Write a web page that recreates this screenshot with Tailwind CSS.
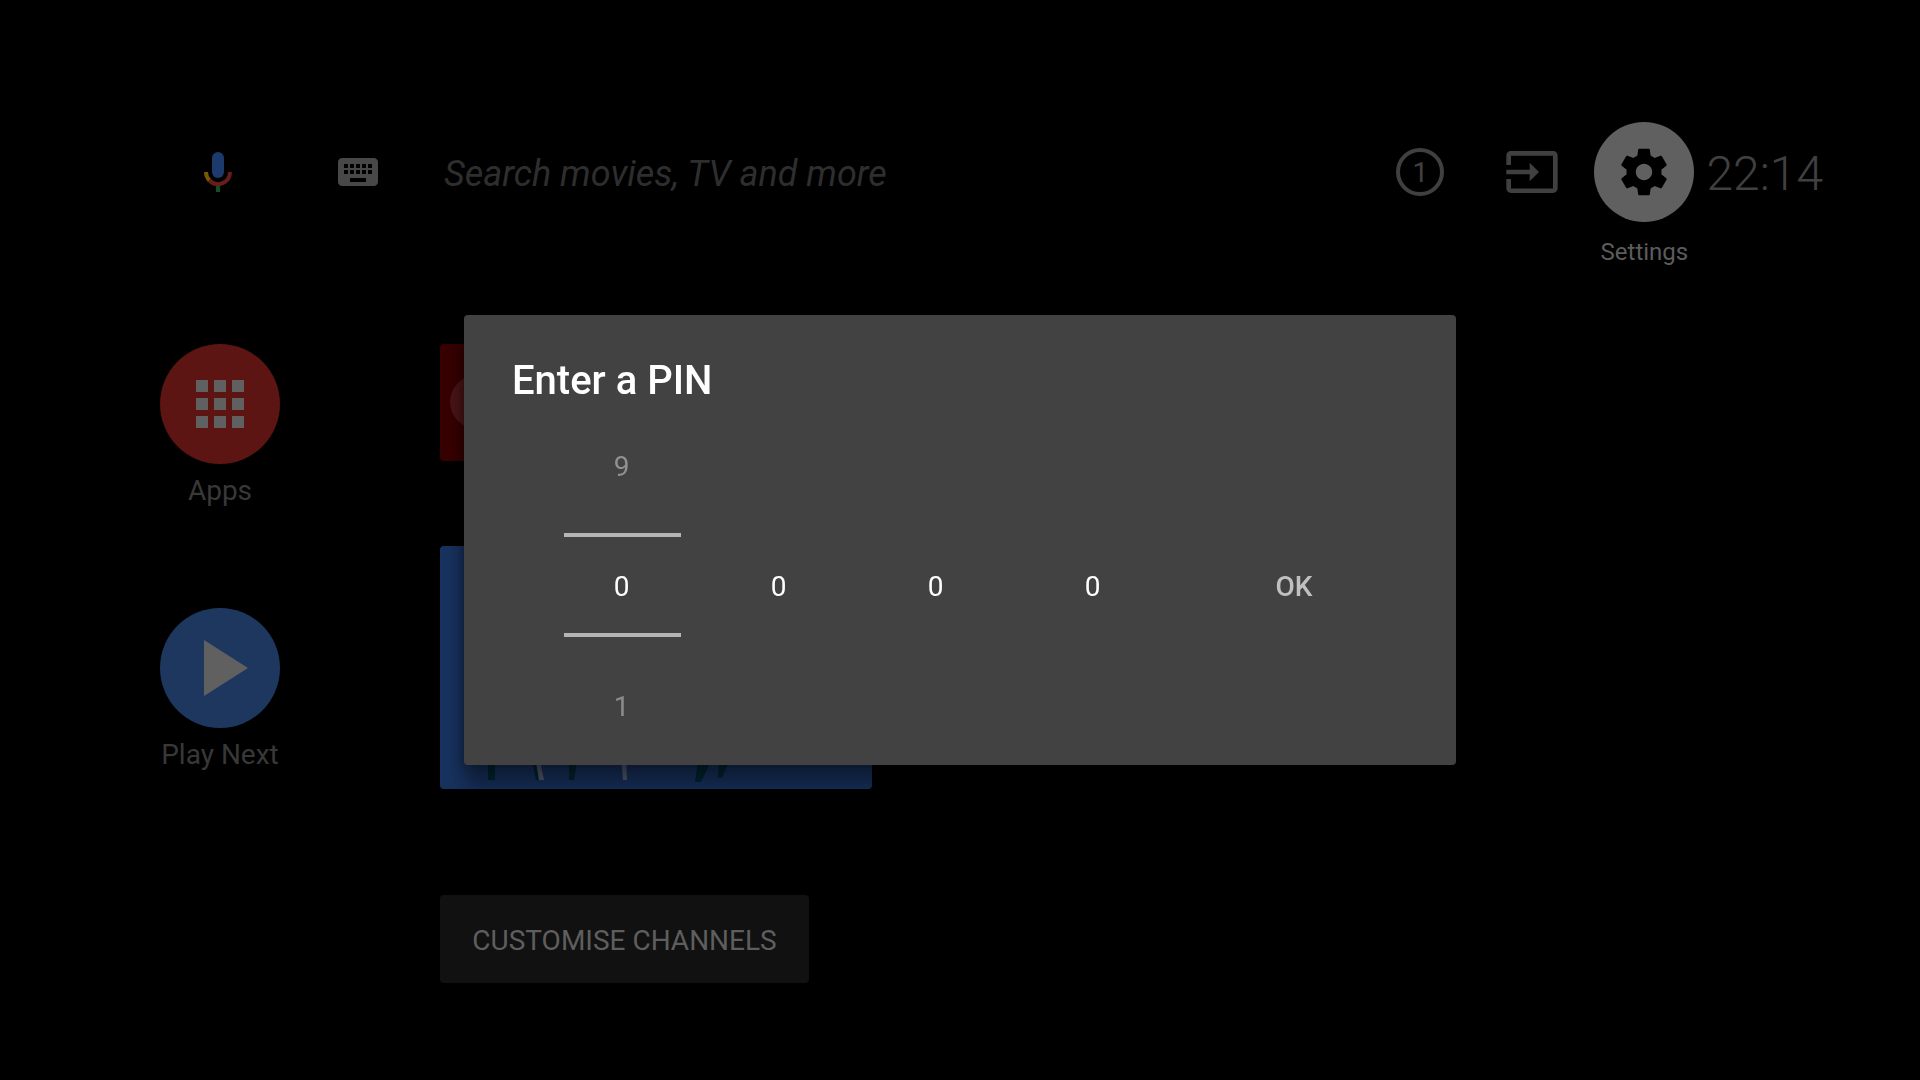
<!DOCTYPE html>
<html lang="en-GB">
<head>
  <meta charset="UTF-8">
  <meta name="viewport" content="width=device-width, initial-scale=1.0">
  <title>Home</title>
  <script src="https://cdn.jsdelivr.net/npm/@tailwindcss/browser@4"></script>
</head>
<body class="min-h-screen bg-black font-[Roboto,sans-serif]">

  <!-- Top bar -->
  <header class="flex items-start pt-[122px] pl-40 pr-[97px]">
    <button aria-label="Voice search" class="w-[116px] h-[100px] flex items-center justify-center">
      <svg width="28" height="40" viewBox="0 0 28 40" fill="none">
        <rect x="8" y="0" width="12" height="26" rx="6" fill="#1c3a6c"/>
        <path d="M2 20a12 12 0 0 0 3.5 8.5" stroke="#785800" stroke-width="4"/>
        <path d="M5.500 28.500A12 12 0 0 0 26 20" stroke="#651f18" stroke-width="4"/>
        <path d="M14 34v6" stroke="#164d26" stroke-width="4"/>
      </svg>
    </button>
    <button aria-label="Keyboard search" class="w-[84px] h-[100px] ml-10 flex items-center justify-center">
      <svg width="48" height="48" viewBox="0 0 24 24" fill="#484848">
        <path d="M20 5H4c-1.100 0-1.990.9-1.990 2L2 17c0 1.100.9 2 2 2h16c1.100 0 2-.9 2-2V7c0-1.100-.9-2-2-2zm-9 3h2v2h-2V8zm0 3h2v2h-2v-2zM8 8h2v2H8V8zm0 3h2v2H8v-2zm-1 2H5v-2h2v2zm0-3H5V8h2v2zm9 7H8v-2h8v2zm0-4h-2v-2h2v2zm0-3h-2V8h2v2zm3 3h-2v-2h2v2zm0-3h-2V8h2v2z"/>
      </svg>
    </button>
    <input type="text" aria-label="Search" placeholder="Search movies, TV and more"
      class="flex-1 min-w-0 h-[100px] ml-10 pt-1 pl-1 bg-transparent text-4xl italic text-[#2e2e2e] placeholder-[#2e2e2e] focus:outline-none">

    <div class="flex items-start gap-3">
      <button aria-label="Notifications" class="w-[100px] h-[100px] flex items-center justify-center">
        <span class="w-12 h-12 pt-0.5 rounded-full border-4 border-[#404040] flex items-center justify-center text-[28px] leading-8 text-[#404040]">1</span>
      </button>
      <button aria-label="Inputs" class="w-[100px] h-[100px] flex items-center justify-center">
        <svg width="56" height="56" viewBox="0 0 24 24" fill="#404040">
          <path d="M21 3.010H3c-1.100 0-2 .9-2 2V9h2V4.990h18v14.030H3V15H1v4.010c0 1.100.9 1.980 2 1.980h18c1.100 0 2-.88 2-1.980v-14c0-1.110-.9-2-2-2zM11 16l4-4-4-4v3H1v2h10v3z"/>
        </svg>
      </button>
      <div class="flex flex-col items-center">
        <button aria-labelledby="settings-label" class="w-[100px] h-[100px] rounded-full bg-[#606060] flex items-center justify-center">
          <svg width="56" height="56" viewBox="0 0 24 24" fill="#000">
            <path d="M19.430 12.980c.04-.32.07-.64.07-.98s-.03-.66-.07-.98l2.110-1.650c.19-.15.24-.42.12-.64l-2-3.460c-.12-.22-.39-.3-.61-.22l-2.490 1c-.52-.4-1.080-.73-1.690-.98l-.38-2.650C14.460 2.180 14.250 2 14 2h-4c-.25 0-.46.18-.49.42l-.38 2.650c-.61.25-1.170.59-1.690.98l-2.490-1c-.23-.09-.49 0-.61.22l-2 3.460c-.13.22-.07.49.12.64l2.110 1.650c-.04.32-.07.65-.07.98s.03.66.07.98l-2.110 1.650c-.19.15-.24.42-.12.64l2 3.460c.12.22.39.3.61.22l2.490-1c.52.4 1.080.73 1.690.98l.38 2.650c.03.24.24.42.49.42h4c.25 0 .46-.18.49-.42l.38-2.650c.61-.25 1.170-.59 1.690-.98l2.490 1c.23.09.49 0 .61-.22l2-3.460c.12-.22.07-.49-.12-.64l-2.110-1.650zM12 15.500c-1.930 0-3.500-1.570-3.500-3.500s1.570-3.500 3.500-3.500 3.500 1.570 3.500 3.500-1.570 3.500-3.500 3.500z"/>
          </svg>
        </button>
        <span id="settings-label" class="mt-[14px] text-2xl text-[#5c5c5c]">Settings</span>
      </div>
      <time class="h-[100px] pt-1 flex items-center text-5xl font-light text-[#404040]">22:14</time>
    </div>
  </header>

  <!-- Channel rows -->
  <main class="flex items-start gap-40 pt-[76px] pl-40 pb-24">
    <nav class="w-[120px] flex flex-col gap-[101px]">
      <a href="#apps" class="flex flex-col items-center gap-[11px] whitespace-nowrap text-[28px] leading-8 text-[#383838]">
        <span class="w-[120px] h-[120px] rounded-full bg-[#5c1513] grid grid-cols-3 gap-1.5 place-content-center justify-items-center p-9">
          <span class="w-3 h-3 bg-[#606060]"></span>
          <span class="w-3 h-3 bg-[#606060]"></span>
          <span class="w-3 h-3 bg-[#606060]"></span>
          <span class="w-3 h-3 bg-[#606060]"></span>
          <span class="w-3 h-3 bg-[#606060]"></span>
          <span class="w-3 h-3 bg-[#606060]"></span>
          <span class="w-3 h-3 bg-[#606060]"></span>
          <span class="w-3 h-3 bg-[#606060]"></span>
          <span class="w-3 h-3 bg-[#606060]"></span>
        </span>
        Apps
      </a>
      <a href="#play-next" class="flex flex-col items-center gap-[11px] whitespace-nowrap text-[28px] leading-8 text-[#383838]">
        <svg width="120" height="120" viewBox="0 0 120 120">
          <circle cx="60" cy="60" r="60" fill="#1d375f"/>
          <path d="M44 32v56l44-28z" fill="#606060"/>
        </svg>
        Play Next
      </a>
    </nav>

    <div class="flex flex-col items-start">
      <a href="#app" aria-label="App" class="w-[208px] h-[117px] rounded bg-[#380000] overflow-hidden">
        <svg width="208" height="117" viewBox="0 0 208 117">
          <circle cx="37" cy="58" r="27" fill="#4b1418"/>
        </svg>
      </a>
      <a href="#programme" aria-label="Programme" class="w-[432px] h-[243px] mt-[85px] rounded bg-[#18325f] overflow-hidden">
        <svg width="432" height="243" viewBox="0 0 432 243">
          <g fill="#002634">
            <path d="M48 210h7v24h-7z"/>
            <path d="M91 210h6l4 24h-5z"/>
            <path d="M129 210h9l-4 24h-5z"/>
            <path d="M258 215h13l-10 21h-6z"/>
            <path d="M279 215h10l-7 17h-4z"/>
          </g>
          <path d="M95 210h4l5 24h-5zM181 210h5l1 24h-4z" fill="#565e70"/>
        </svg>
      </a>
      <button class="w-[369px] h-[88px] mt-[106px] pt-1 rounded bg-[#111] text-[28px] leading-8 text-[#5e5e5e]">CUSTOMISE CHANNELS</button>
    </div>
  </main>

  <!-- PIN dialog -->
  <div class="fixed inset-0 flex items-center justify-center">
    <form role="dialog" aria-labelledby="pin-title" class="w-[992px] max-w-full rounded bg-[#424242] pt-[42px] pb-[29px] shadow-[0_24px_20px_rgba(0,0,0,0.35),0_2px_16px_rgba(0,0,0,0.4)]">
      <h1 id="pin-title" class="pl-12 text-[40px] leading-12 font-medium text-white">Enter a PIN</h1>
      <div class="flex items-center gap-10 mt-[31px] pl-[100px] text-[28px] leading-8 text-white">
        <div class="w-[117px] flex flex-col">
          <button type="button" aria-label="Previous digit" class="h-[60px] mb-[37px] pt-0.5 pr-0.5 text-[#909090]">9</button>
          <input type="text" inputmode="numeric" aria-label="First digit" value="0"
            class="w-full h-[104px] pt-0.5 pr-0.5 border-y-4 border-[#b5b5b5] text-center focus:outline-none">
          <button type="button" aria-label="Next digit" class="h-[60px] mt-[39px] pt-0.5 pr-0.5 text-[#8c8c8c]">1</button>
        </div>
        <input type="text" inputmode="numeric" aria-label="Second digit" value="0" class="w-[117px] h-[104px] pr-0.5 text-center focus:outline-none">
        <input type="text" inputmode="numeric" aria-label="Third digit" value="0" class="w-[117px] h-[104px] pr-0.5 text-center focus:outline-none">
        <input type="text" inputmode="numeric" aria-label="Fourth digit" value="0" class="w-[117px] h-[104px] pr-0.5 text-center focus:outline-none">
        <button type="submit" class="w-[100px] h-[60px] ml-[53px] pt-0.5 pr-0.5 font-medium text-[#c0c0c0]">OK</button>
      </div>
    </form>
  </div>

</body>
</html>
